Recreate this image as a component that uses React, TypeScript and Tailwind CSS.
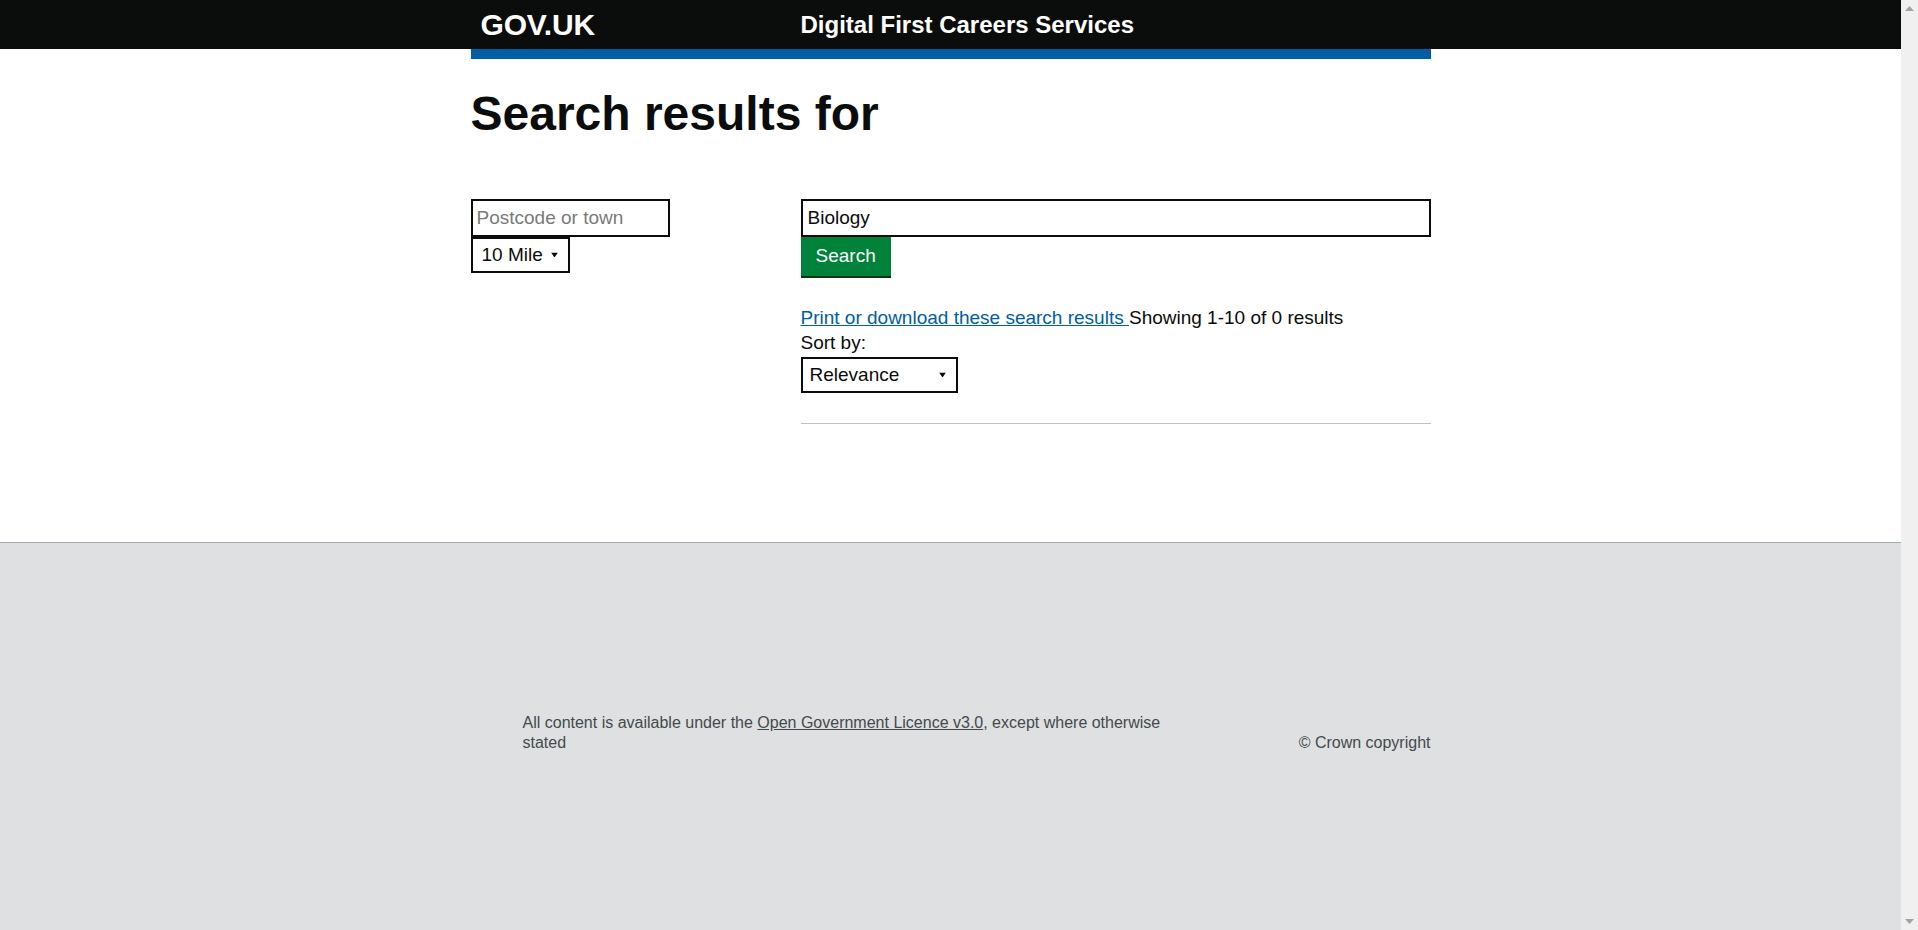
const Caret = () => (
  <svg width="7" height="5" viewBox="0 0 7 5" className="absolute top-1/2 -translate-y-1/2 right-[10px] pointer-events-none">
    <path d="M0 0h7L3.5 5z" fill="#0b0c0c" />
  </svg>
)

const Header = () => (
  <div className="bg-[#0b0c0c] w-full shrink-0">
    <div className="w-[960px] mx-auto h-[49px] flex items-center">
      <div className="w-[330px] pl-[10px] text-white text-[30px] font-bold leading-none tracking-[-0.2px]">GOV.UK</div>
      <div className="text-white text-[24px] font-bold leading-none">Digital First Careers Services</div>
    </div>
  </div>
)

// window scrollbar from the screenshot (page fits, so no thumb)
const Scrollbar = () => (
  <div className="w-[17px] shrink-0 bg-[#f0f0f0] flex flex-col justify-between items-center py-[6px]">
    <svg width="9" height="5" viewBox="0 0 9 5">
      <path d="M0 5L4.5 0L9 5z" fill="#a3a3a3" />
    </svg>
    <svg width="9" height="5" viewBox="0 0 9 5">
      <path d="M0 0h9L4.5 5z" fill="#a3a3a3" />
    </svg>
  </div>
)

const App = () => {
  return (
    <div className="h-screen w-full flex overflow-hidden bg-white text-[#0b0c0c] font-['Liberation_Sans',Arial,sans-serif]">
      <div className="flex-1 min-w-0 flex flex-col">
        <Header />
        <div className="w-[960px] mx-auto h-[10px] bg-[#005ea5] shrink-0" />

        <main className="w-[960px] mx-auto pb-[118px] shrink-0">
          <h1 className="mt-[30px] text-[48px] leading-[50px] font-bold">Search results for</h1>

          <div className="flex mt-[60px]">
            <div className="w-[330px] shrink-0 flex flex-col items-start">
              <input
                placeholder="Postcode or town"
                className="w-[199px] h-[38px] border-2 border-[#0b0c0c] px-[4px] text-[19px] placeholder:text-[#7a7a7a] outline-none"
              />
              <div className="relative w-[99px] h-[36px] border-2 border-[#0b0c0c] flex items-center pl-[9px] text-[19px]">
                10 Mile
                <Caret />
              </div>
            </div>

            <div className="flex-1 flex flex-col items-start">
              <input
                defaultValue="Biology"
                className="w-[630px] h-[38px] border-2 border-[#0b0c0c] px-[5px] text-[19px] outline-none"
              />
              <button className="h-[39px] px-[15px] bg-[#00823b] text-white text-[19px] shadow-[0_2px_0_#003618]">
                Search
              </button>

              <p className="mt-[29px] text-[19px] leading-[25px]">
                <a href="#" className="text-[#005ea5] underline">Print or download these search results </a>
                Showing 1-10 of 0 results
              </p>
              <p className="text-[19px] leading-[25px]">Sort by:</p>
              <div className="relative mt-[2px] w-[157px] h-[36px] border-2 border-[#0b0c0c] flex items-center pl-[7px] text-[19px]">
                Relevance
                <Caret />
              </div>
              <div className="mt-[30px] w-[630px] h-px bg-[#bfc1c3]" />
            </div>
          </div>
        </main>

        <footer className="flex-1 bg-[#dee0e2] border-t border-[#a1acb2]">
          <div className="w-[960px] mx-auto pt-[170px] flex items-end justify-between text-[16px] leading-[20px] text-[#454a4c]">
            <p className="ml-[52px] w-[660px]">
              All content is available under the <a href="#" className="underline">Open Government Licence v3.0</a>, except where otherwise stated
            </p>
            <p>© Crown copyright</p>
          </div>
        </footer>
      </div>
      <Scrollbar />
    </div>
  )
}

export default App
